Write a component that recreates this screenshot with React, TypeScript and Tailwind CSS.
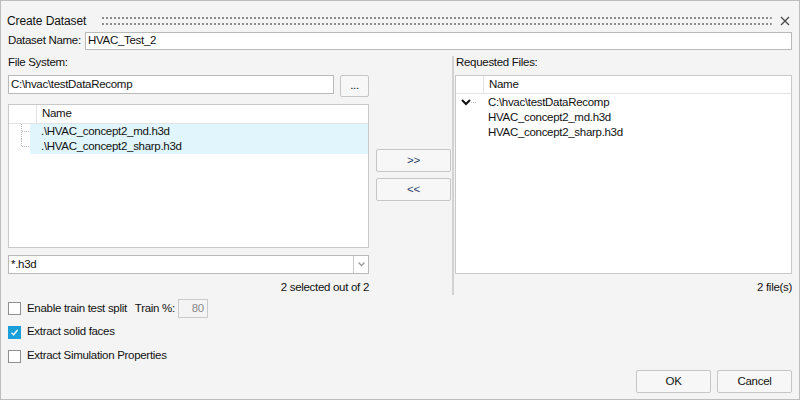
import React from 'react';

function Dots() {
  return (
    <svg className="flex-1 h-[8px]" preserveAspectRatio="none">
      <defs>
        <pattern id="dots" width="4" height="2" patternUnits="userSpaceOnUse">
          <rect x="0" y="0" width="2" height="2" fill="#8c8c8c" />
        </pattern>
      </defs>
      <rect x="0" y="0" width="100%" height="2" fill="url(#dots)" />
      <rect x="0" y="6" width="100%" height="2" fill="url(#dots)" />
    </svg>
  );
}

function Check({ checked }: { checked?: boolean }) {
  if (checked) {
    return (
      <span className="w-[13px] h-[13px] bg-[#1a9fdb] border border-[#1a9fdb] flex items-center justify-center shrink-0">
        <svg width="9" height="9" viewBox="0 0 9 9">
          <path d="M1.5 4.8 L3.6 6.8 L7.6 2" stroke="white" strokeWidth="1.4" fill="none" />
        </svg>
      </span>
    );
  }
  return <span className="w-[13px] h-[13px] bg-white border border-[#8f8f8f] shrink-0" />;
}

function TreeGuide({ last }: { last?: boolean }) {
  return (
    <svg width="21" height="15" className="shrink-0">
      <line x1="12.5" y1="0" x2="12.5" y2={last ? 8 : 15} stroke="#b8b8b8" strokeDasharray="1 1" />
      <line x1="13" y1="7.5" x2="20" y2="7.5" stroke="#b8b8b8" strokeDasharray="1 1" />
    </svg>
  );
}

export default function App() {
  const files = ['.\\HVAC_concept2_md.h3d', '.\\HVAC_concept2_sharp.h3d'];
  const requested = ['HVAC_concept2_md.h3d', 'HVAC_concept2_sharp.h3d'];

  return (
    <div className="w-[800px] h-[400px] border border-[#bdbdbd] bg-[#f4f4f4] flex flex-col text-[11.5px] tracking-[-0.3px] text-[#111] font-['Liberation_Sans',Arial,sans-serif] overflow-hidden">
      {/* title bar */}
      <div className="mt-[11px] h-[18px] flex items-center pl-[6px] pr-[9px]">
        <span className="text-[12px] tracking-[-0.1px]">Create Dataset</span>
        <div className="flex-1 flex ml-[16px] mr-[8px]">
          <Dots />
        </div>
        <svg width="10" height="10" viewBox="0 0 10 10">
          <path d="M1 1 L9 9 M9 1 L1 9" stroke="#4a4a4a" strokeWidth="1.3" />
        </svg>
      </div>

      {/* dataset name */}
      <div className="mt-[2px] h-[18px] flex items-center pl-[7px] pr-[7px]">
        <span className="w-[77px]">Dataset Name:</span>
        <div className="flex-1 h-[18px] bg-white border border-[#b9b9b9] flex items-center px-[2px]">HVAC_Test_2</div>
      </div>

      {/* main area */}
      <div className="mt-[6px] h-[239px] flex">
        {/* left */}
        <div className="ml-[7px] w-[361px] flex flex-col">
          <div className="h-[14px] flex items-center">File System:</div>
          <div className="mt-[5px] flex gap-[6px]">
            <div className="flex-1 h-[19px] bg-white border border-[#b9b9b9] flex items-center px-[2px]">C:\hvac\testDataRecomp</div>
            <div className="w-[29px] h-[22px] border border-[#c6c6c6] rounded-[2px] bg-[#f7f7f7] flex items-center justify-center">...</div>
          </div>
          <div className="mt-[7px] h-[144px] bg-white border border-[#c9c9c9] flex flex-col">
            <div className="h-[19px] flex border-b border-[#e3e3e3] shrink-0">
              <div className="w-[28px] border-r border-[#e3e3e3]" />
              <div className="pl-[5px] flex items-center">Name</div>
            </div>
            {files.map((f, i) => (
              <div key={f} className="h-[15px] flex items-center">
                <TreeGuide last={i === files.length - 1} />
                <div className="flex-1 h-[15px] bg-[#e0f6fc] flex items-center pl-[11px]">{f}</div>
              </div>
            ))}
          </div>
          <div className="mt-[7px] h-[19px] bg-white border border-[#b9b9b9] flex">
            <div className="flex-1 flex items-center px-[2px]">*.h3d</div>
            <div className="w-[15px] border-l border-[#c9c9c9] flex items-center justify-center">
              <svg width="7" height="5" viewBox="0 0 7 5">
                <path d="M0.5 0.5 L3.5 3.5 L6.5 0.5" stroke="#9a9a9a" strokeWidth="1.3" fill="none" />
              </svg>
            </div>
          </div>
          <div className="mt-[7px] h-[14px] flex items-center justify-end">2 selected out of 2</div>
        </div>

        {/* move buttons */}
        <div className="ml-[7px] w-[75px] flex flex-col gap-[6px] pt-[93px]">
          <div className="h-[23px] border border-[#c6c6c6] rounded-[2px] bg-[#f7f7f7] flex items-center justify-center text-[#2b3f6b]">&gt;&gt;</div>
          <div className="h-[23px] border border-[#c6c6c6] rounded-[2px] bg-[#f7f7f7] flex items-center justify-center text-[#2b3f6b]">&lt;&lt;</div>
        </div>

        {/* divider */}
        <div className="ml-[1px] w-[2px] bg-[#d2d2d2]" />

        {/* right */}
        <div className="ml-[1px] w-[337px] flex flex-col">
          <div className="h-[14px] flex items-center pl-[1px]">Requested Files:</div>
          <div className="mt-[5px] h-[199px] bg-white border border-[#c9c9c9] flex flex-col">
            <div className="h-[18px] flex border-b border-[#e3e3e3] shrink-0">
              <div className="w-[28px] border-r border-[#e3e3e3]" />
              <div className="pl-[5px] flex items-center">Name</div>
            </div>
            <div className="mt-[1px] h-[15px] flex items-center">
              <svg width="32" height="15" className="shrink-0">
                <path d="M6 5 L10 9 L14 5" stroke="#111" strokeWidth="2" fill="none" />
                <line x1="15" y1="7.5" x2="21" y2="7.5" stroke="#c0c0c0" strokeDasharray="1 1" />
              </svg>
              <span>C:\hvac\testDataRecomp</span>
            </div>
            {requested.map((r) => (
              <div key={r} className="h-[15px] flex items-center pl-[32px]">{r}</div>
            ))}
          </div>
          <div className="mt-[7px] h-[14px] flex items-center justify-end">2 file(s)</div>
        </div>
      </div>

      {/* options */}
      <div className="mt-[4px] pl-[7px] h-[19px] flex items-center">
        <Check />
        <span className="ml-[6px]">Enable train test split</span>
        <span className="ml-[8px]">Train %:</span>
        <div className="ml-[3px] w-[30px] h-[19px] border border-[#c9c9c9] bg-[#f4f4f4] flex items-center justify-end pr-[3px] text-[#8a8a8a]">80</div>
      </div>
      <div className="mt-[7px] pl-[7px] h-[14px] flex items-center">
        <Check checked />
        <span className="ml-[6px]">Extract solid faces</span>
      </div>
      <div className="mt-[10px] pl-[7px] h-[14px] flex items-center">
        <Check />
        <span className="ml-[6px]">Extract Simulation Properties</span>
      </div>

      {/* footer */}
      <div className="mt-[7px] pr-[7px] flex justify-end gap-[6px]">
        <div className="w-[75px] h-[23px] border border-[#c6c6c6] rounded-[2px] bg-[#f7f7f7] flex items-center justify-center">OK</div>
        <div className="w-[75px] h-[23px] border border-[#c6c6c6] rounded-[2px] bg-[#f7f7f7] flex items-center justify-center">Cancel</div>
      </div>
    </div>
  );
}
